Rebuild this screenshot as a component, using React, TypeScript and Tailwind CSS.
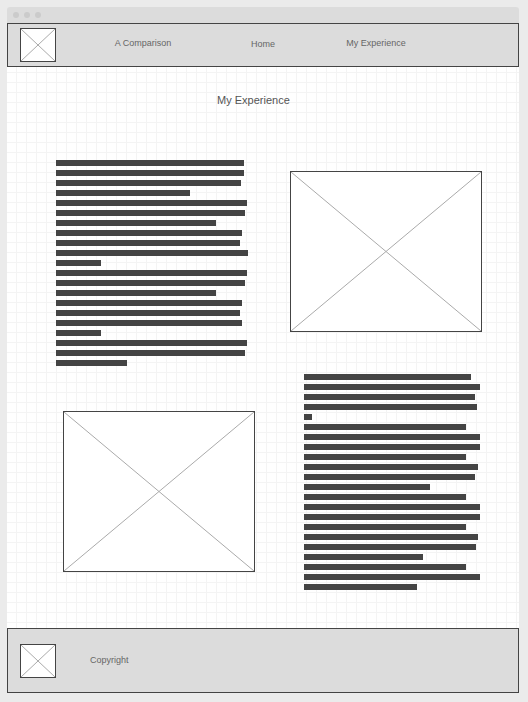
import React from 'react';

// bar widths (px) for the fake paragraphs
const leftLines = [188, 188, 185, 134, 191, 189, 160, 186, 184, 192, 45, 191, 189, 160, 186, 184, 186, 45, 191, 189, 71];
const rightLines = [167, 176, 171, 173, 8, 162, 176, 176, 162, 174, 171, 126, 162, 176, 176, 162, 174, 172, 119, 162, 176, 113];

function Placeholder({ className }: { className: string }) {
  return (
    <div className={`relative bg-white border border-[#444] ${className}`}>
      <svg className="absolute inset-0 w-full h-full" preserveAspectRatio="none" viewBox="0 0 100 100">
        <line x1="0" y1="0" x2="100" y2="100" stroke="#aaa" strokeWidth="1" vectorEffect="non-scaling-stroke" />
        <line x1="100" y1="0" x2="0" y2="100" stroke="#aaa" strokeWidth="1" vectorEffect="non-scaling-stroke" />
      </svg>
    </div>
  );
}

function TextBlock({ lines, className }: { lines: number[]; className: string }) {
  return (
    <div className={`flex flex-col gap-[4px] ${className}`}>
      {lines.map((w, i) => (
        <div key={i} className="h-[6px] bg-[#444]" style={{ width: w }} />
      ))}
    </div>
  );
}

export default function App() {
  return (
    <div className="w-[528px] h-[702px] bg-[#ebebeb] pt-[7px] pl-[7px] font-['Liberation_Sans',Arial,sans-serif] overflow-hidden">
      <div className="w-[512px] flex flex-col">
        {/* window title bar */}
        <div className="h-[16px] bg-[#dcdcdc] rounded-t-[3px] flex items-center gap-[5px] pl-[6px]">
          <span className="w-[6px] h-[6px] rounded-full bg-[#cbcbcb]" />
          <span className="w-[6px] h-[6px] rounded-full bg-[#cbcbcb]" />
          <span className="w-[6px] h-[6px] rounded-full bg-[#cbcbcb]" />
        </div>

        {/* nav */}
        <div className="h-[44px] bg-[#dcdcdc] border border-[#444] flex items-center">
          <Placeholder className="w-[36px] h-[34px] ml-[12px]" />
          <div className="w-[100px] ml-[37px] mb-[2px] text-center text-[9px] text-[#666]">A Comparison</div>
          <div className="w-[100px] ml-[20px] text-center text-[9px] text-[#666]">Home</div>
          <div className="w-[100px] ml-[13px] mb-[2px] text-center text-[9px] text-[#666]">My Experience</div>
        </div>

        {/* content */}
        <div className="h-[561px] bg-white bg-[linear-gradient(to_right,#f4f4f4_1px,transparent_1px),linear-gradient(to_bottom,#f4f4f4_1px,transparent_1px)] bg-[size:10px_10px] bg-[position:9px_5px] flex flex-col">
          <div className="mt-[26px] ml-[210px] h-[14px] leading-[14px] text-[11px] text-[#555]">My Experience</div>

          <div className="flex items-start mt-[53px]">
            <TextBlock lines={leftLines} className="ml-[49px] w-[192px]" />
            <Placeholder className="w-[192px] h-[161px] ml-[42px] mt-[11px]" />
          </div>

          <div className="flex items-start mt-[8px]">
            <Placeholder className="w-[192px] h-[161px] ml-[56px] mt-[37px]" />
            <TextBlock lines={rightLines} className="ml-[49px] w-[176px]" />
          </div>
        </div>

        {/* footer */}
        <div className="h-[65px] bg-[#dcdcdc] border border-[#444] flex items-center">
          <Placeholder className="w-[36px] h-[34px] ml-[12px]" />
          <div className="ml-[34px] text-[9px] text-[#666]">Copyright</div>
        </div>
      </div>
    </div>
  );
}
